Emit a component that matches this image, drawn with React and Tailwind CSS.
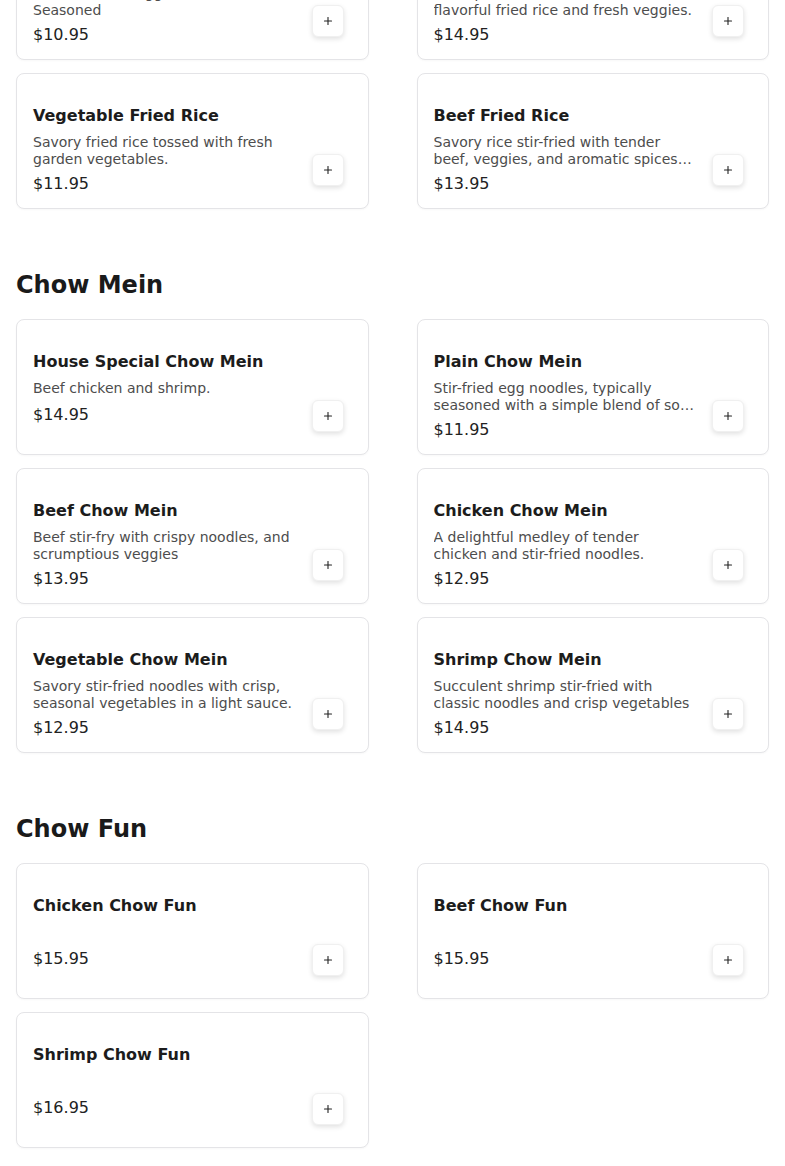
import { Plus } from "lucide-react";

const sections = [
  {
    title: null,
    items: [
      {
        name: "Egg Fried Rice",
        desc: "Fried rice with egg and scallions, Seasoned",
        price: "$10.95",
      },
      {
        name: "House Special Fried Rice",
        desc: "Shrimp, chicken and beef with flavorful fried rice and fresh veggies.",
        price: "$14.95",
      },
      {
        name: "Vegetable Fried Rice",
        desc: "Savory fried rice tossed with fresh garden vegetables.",
        price: "$11.95",
      },
      {
        name: "Beef Fried Rice",
        desc: "Savory rice stir-fried with tender beef, veggies, and aromatic spices for a hearty meal.",
        price: "$13.95",
      },
    ],
  },
  {
    title: "Chow Mein",
    items: [
      { name: "House Special Chow Mein", desc: "Beef chicken and shrimp.", price: "$14.95" },
      {
        name: "Plain Chow Mein",
        desc: "Stir-fried egg noodles, typically seasoned with a simple blend of soy sauce and sesame oil.",
        price: "$11.95",
      },
      {
        name: "Beef Chow Mein",
        desc: "Beef stir-fry with crispy noodles, and scrumptious veggies",
        price: "$13.95",
      },
      {
        name: "Chicken Chow Mein",
        desc: "A delightful medley of tender chicken and stir-fried noodles.",
        price: "$12.95",
      },
      {
        name: "Vegetable Chow Mein",
        desc: "Savory stir-fried noodles with crisp, seasonal vegetables in a light sauce.",
        price: "$12.95",
      },
      {
        name: "Shrimp Chow Mein",
        desc: "Succulent shrimp stir-fried with classic noodles and crisp vegetables",
        price: "$14.95",
      },
    ],
  },
  {
    title: "Chow Fun",
    items: [
      { name: "Chicken Chow Fun", desc: "", price: "$15.95" },
      { name: "Beef Chow Fun", desc: "", price: "$15.95" },
      { name: "Shrimp Chow Fun", desc: "", price: "$16.95" },
    ],
  },
];

export default function App() {
  return (
    <div className="min-h-screen bg-white px-4 pb-[17px] font-['DejaVu_Sans',sans-serif] overflow-hidden">
      <div className="-mt-[76px]">
        {sections.map((s, i) => (
          <section key={i} className={i > 0 ? "mt-[60px]" : ""}>
            {s.title && (
              <h2 className="text-2xl leading-8 font-bold text-[#1a1a1a] mb-[18px]">{s.title}</h2>
            )}
            <div className="grid grid-cols-2 gap-x-12 gap-y-[13px]">
              {s.items.map((it) => (
                <MenuCard key={it.name} item={it} />
              ))}
            </div>
          </section>
        ))}
      </div>
    </div>
  );
}

function MenuCard({ item }) {
  return (
    <div className="h-[136px] flex gap-4 pl-4 pr-6 rounded-lg border border-[#e4e4e7] bg-white shadow-[0_1px_2px_rgba(0,0,0,0.03)]">
      <div className="flex-1 min-w-0 pt-[30px]">
        <div className="text-base leading-6 font-bold text-[#1c1c1c]">{item.name}</div>
        <p className="mt-[6px] min-h-[19px] text-sm leading-[17px] text-[#4d4d4d] line-clamp-2">
          {item.desc}
        </p>
        <div className="mt-[4px] text-base leading-6 text-[#222]">{item.price}</div>
      </div>
      <div className="pt-[80px]">
        <button className="w-8 h-8 flex items-center justify-center rounded-md bg-white border border-[#f0f0f0] shadow-[0_2px_5px_rgba(0,0,0,0.12)] text-[#222]">
          <Plus size={12} strokeWidth={2.2} />
        </button>
      </div>
    </div>
  );
}
